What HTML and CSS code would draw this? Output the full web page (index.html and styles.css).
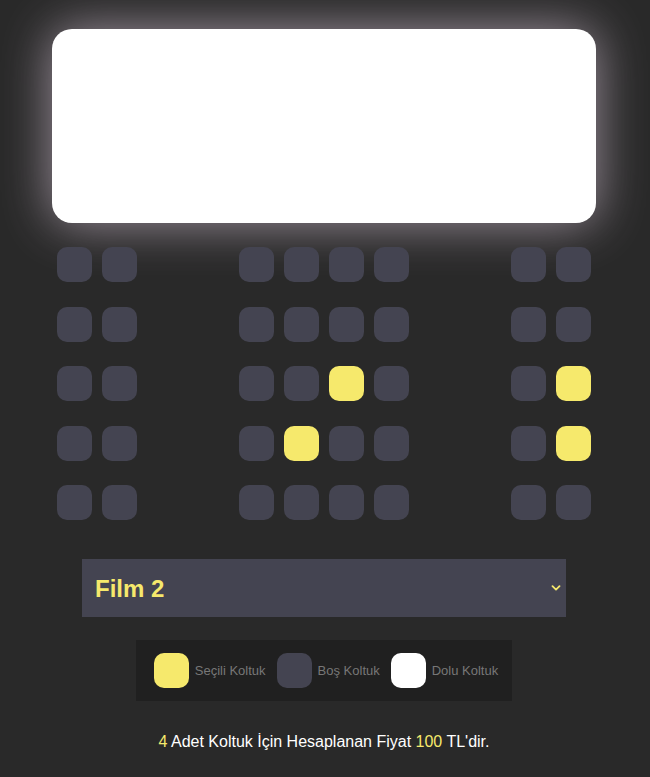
FILE: index.html
```html
<!DOCTYPE html>
<html lang="tr">
<head>
<meta charset="utf-8">
<title>Sinema Koltuk Seçimi</title>
<link rel="stylesheet" href="styles.css">
</head>
<body>
<div class="app">
  <div class="screen"></div>

  <div class="hall">
    <div class="row">
      <div class="group"><div class="seat"></div><div class="seat"></div></div>
      <div class="group"><div class="seat"></div><div class="seat"></div><div class="seat"></div><div class="seat"></div></div>
      <div class="group"><div class="seat"></div><div class="seat"></div></div>
    </div>
    <div class="row">
      <div class="group"><div class="seat"></div><div class="seat"></div></div>
      <div class="group"><div class="seat"></div><div class="seat"></div><div class="seat"></div><div class="seat"></div></div>
      <div class="group"><div class="seat"></div><div class="seat"></div></div>
    </div>
    <div class="row">
      <div class="group"><div class="seat"></div><div class="seat"></div></div>
      <div class="group"><div class="seat"></div><div class="seat"></div><div class="seat selected"></div><div class="seat"></div></div>
      <div class="group"><div class="seat"></div><div class="seat selected"></div></div>
    </div>
    <div class="row">
      <div class="group"><div class="seat"></div><div class="seat"></div></div>
      <div class="group"><div class="seat"></div><div class="seat selected"></div><div class="seat"></div><div class="seat"></div></div>
      <div class="group"><div class="seat"></div><div class="seat selected"></div></div>
    </div>
    <div class="row">
      <div class="group"><div class="seat"></div><div class="seat"></div></div>
      <div class="group"><div class="seat"></div><div class="seat"></div><div class="seat"></div><div class="seat"></div></div>
      <div class="group"><div class="seat"></div><div class="seat"></div></div>
    </div>
  </div>

  <div class="picker">
    <select class="movie">
      <option>Film 1</option>
      <option selected>Film 2</option>
      <option>Film 3</option>
    </select>
    <svg class="chevron" width="10" height="6" viewBox="0 0 10 6" aria-hidden="true"><path d="M1.5 1.2 L5 4.6 L8.5 1.2" fill="none" stroke="#f6e96c" stroke-width="1.8" stroke-linecap="round" stroke-linejoin="round"/></svg>
  </div>

  <ul class="legend">
    <li class="legend-item"><span class="swatch swatch-selected"></span><small>Seçili Koltuk</small></li>
    <li class="legend-item"><span class="swatch"></span><small>Boş Koltuk</small></li>
    <li class="legend-item"><span class="swatch swatch-occupied"></span><small>Dolu Koltuk</small></li>
  </ul>

  <p class="summary"><span class="hl">4</span> Adet Koltuk İçin Hesaplanan Fiyat <span class="hl">100</span> TL'dir.</p>
</div>
</body>
</html>
```
FILE: styles.css
```css
* { box-sizing: border-box; }

html, body {
  margin: 0;
  padding: 0;
  background: #292929;
}

body {
  font-family: "Liberation Sans", Arial, sans-serif;
  color: #ffffff;
  height: 777px;
  overflow: hidden;
}

.app {
  width: 648px;
  display: flex;
  flex-direction: column;
  align-items: center;
  padding-top: 29px;
}

.screen {
  width: 544px;
  height: 194px;
  background: #ffffff;
  border-radius: 20px;
  box-shadow: 0 0 50px rgba(205, 188, 205, 0.72);
}

.hall {
  width: 544px;
  margin-top: 19px;
  display: flex;
  flex-direction: column;
  gap: 14.5px;
}

.row {
  display: flex;
  justify-content: space-between;
}

.group {
  display: flex;
}

.seat {
  width: 35px;
  height: 35px;
  margin: 5px;
  border-radius: 10px;
  background: #444451;
}

.seat.selected {
  background: #f6e96c;
}

.picker {
  position: relative;
  margin-top: 34px;
  width: 484px;
  height: 58px;
}

.movie {
  appearance: none;
  -webkit-appearance: none;
  width: 100%;
  height: 100%;
  border: 0;
  border-radius: 0;
  outline: none;
  background: #444451;
  color: #f6e96c;
  font-family: "Liberation Sans", Arial, sans-serif;
  font-size: 24px;
  font-weight: bold;
  padding: 0 0 0 13px;
}

.chevron {
  position: absolute;
  right: 5px;
  top: 26px;
}

.legend {
  list-style: none;
  margin: 23px 0 0;
  padding: 13px 14px 13px 18px;
  background: #202020;
  display: flex;
  gap: 11px;
  color: #777777;
}

.legend-item {
  display: flex;
  align-items: center;
  gap: 6px;
}

.legend-item small {
  font-size: 13px;
}

.swatch {
  width: 35px;
  height: 35px;
  border-radius: 10px;
  background: #444451;
}

.swatch-selected { background: #f6e96c; }
.swatch-occupied { background: #ffffff; }

.summary {
  margin: 32px 0 0;
  font-size: 16px;
  line-height: 18px;
  text-align: center;
}

.hl { color: #f6e96c; }
```
